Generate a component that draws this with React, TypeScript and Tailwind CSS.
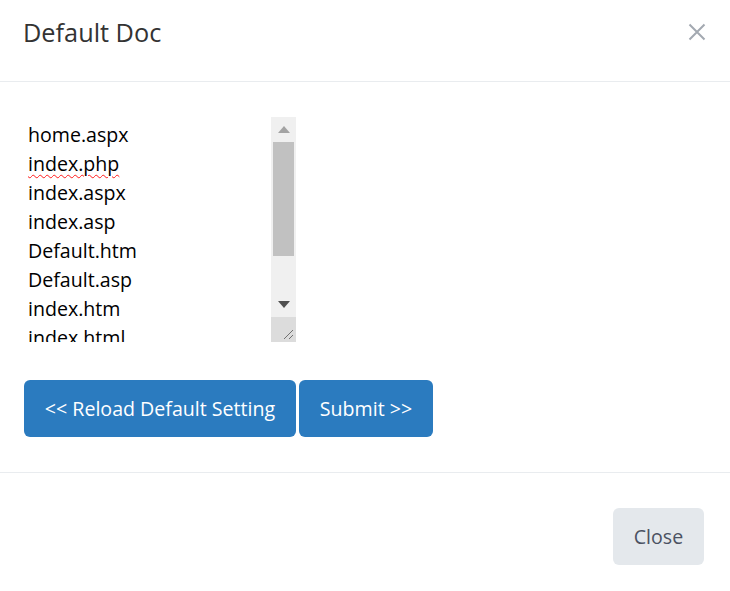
import React from 'react';

const files = [
  'home.aspx',
  'index.php',
  'index.aspx',
  'index.asp',
  'Default.htm',
  'Default.asp',
  'index.htm',
  'index.html',
];

const FakeScrollbar: React.FC = () => (
  <div className="flex flex-col w-[25px] bg-[#f0f0f0]">
    <div className="flex h-[25px] items-center justify-center">
      <svg width="12" height="7" viewBox="0 0 12 7">
        <polygon points="6,0 12,7 0,7" fill="#a3a3a3" />
      </svg>
    </div>
    <div className="mx-[2px] h-[114px] bg-[#c1c1c1]"></div>
    <div className="flex-grow"></div>
    <div className="flex h-[25px] items-center justify-center">
      <svg width="12" height="7" viewBox="0 0 12 7">
        <polygon points="0,0 12,0 6,7" fill="#505050" />
      </svg>
    </div>
    <div className="relative h-[25px] bg-[#dcdcdc]">
      <svg className="absolute right-[2px] bottom-[2px]" width="12" height="12" viewBox="0 0 12 12">
        <line x1="11" y1="2" x2="2" y2="11" stroke="#707070" strokeWidth="1" />
        <line x1="11" y1="7" x2="7" y2="11" stroke="#707070" strokeWidth="1" />
      </svg>
    </div>
  </div>
);

export default function App() {
  return (
    <div className="w-[730px] h-[591px] bg-white font-['Open_Sans',sans-serif] text-[#212529]">
      {/* header */}
      <div className="flex items-start justify-between h-[82px] pl-[23px] pr-[24px] pt-[16px] border-b border-[#e9ecef]">
        <h5 className="text-[25.3px] leading-[32px] text-[#333]">Default Doc</h5>
        <button type="button" className="mt-[7px]">
          <svg width="18" height="18" viewBox="0 0 18 18">
            <path d="M1.5 1.5 L16.5 16.5 M16.5 1.5 L1.5 16.5" stroke="#a3a9b1" strokeWidth="2" />
          </svg>
        </button>
      </div>

      {/* body */}
      <div className="pl-[24px] pt-[35px] pb-[35px] border-b border-[#e9ecef]">
        <div className="flex w-[272px] h-[225px]">
          <div className="flex-grow overflow-hidden pl-[4px] pt-[3px] text-[19.6px] leading-[29px] text-black">
            {files.map((f) => (
              <div key={f}>
                {f === 'index.php' ? (
                  <span className="underline decoration-wavy decoration-[#ff1a1a] decoration-1 underline-offset-[3px]">{f}</span>
                ) : (
                  f
                )}
              </div>
            ))}
          </div>
          <FakeScrollbar />
        </div>
        <div className="flex gap-[3px] mt-[38px]">
          <button type="button" className="h-[57px] w-[272px] rounded-[6px] bg-[#2b7bbf] text-white text-[19.6px]">
            &lt;&lt; Reload Default Setting
          </button>
          <button type="button" className="h-[57px] w-[134px] rounded-[6px] bg-[#2b7bbf] text-white text-[19.6px]">
            Submit &gt;&gt;
          </button>
        </div>
      </div>

      {/* footer */}
      <div className="flex justify-end pr-[26px] pt-[35px]">
        <button type="button" className="h-[57px] w-[91px] rounded-[6px] bg-[#e4e8ec] text-[#4b5262] text-[19.6px]">
          Close
        </button>
      </div>
    </div>
  );
}
